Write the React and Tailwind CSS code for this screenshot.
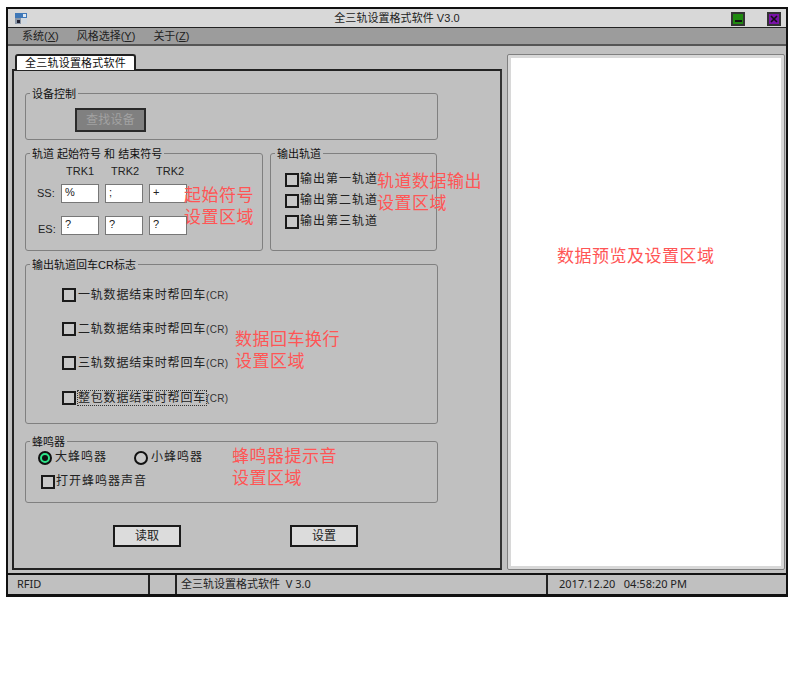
import React from "react";

const cjk = "font-['Liberation_Sans','Noto_Sans_CJK_SC',sans-serif]";

const GroupBox = ({ title, className, children }) => (
  <div className={`relative rounded-[3px] border border-[#808080] ${className}`}>
    <span className="absolute -top-[8px] left-[4px] bg-[#c0c0c0] px-[2px] text-[11px] leading-[16px] text-[#111] whitespace-nowrap">
      {title}
    </span>
    {children}
  </div>
);

const Check = ({ label }) => (
  <div className="flex items-center">
    <span className="w-[14px] h-[14px] shrink-0 border-2 border-[#1a1a1a] bg-[#c8c8c8]" />
    <span className="ml-[1px] text-[12px] leading-[15px] tracking-[1px] text-[#222] whitespace-nowrap">
      {label}
    </span>
  </div>
);

const CrCheck = ({ label, focused }) => (
  <div className="flex items-center h-[16px]">
    <span className="w-[14px] h-[14px] shrink-0 border-2 border-[#1a1a1a] bg-[#c8c8c8]" />
    <span
      className={`ml-[1px] text-[12px] leading-[14px] tracking-[0.8px] text-[#222] whitespace-nowrap ${focused ? "border border-dotted border-[#333]" : "border border-transparent"}`}
    >
      {label}
    </span>
    <span className="text-[10px] text-[#333] tracking-[0.3px] -ml-[1px]">(CR)</span>
  </div>
);

const Radio = ({ label, checked }) => (
  <div className="flex items-center">
    <span
      className={`flex items-center justify-center w-[14px] h-[14px] rounded-full border-2 border-[#111] ${checked ? "bg-[#2ee58a]" : "bg-[#c8c8c8]"}`}
    >
      {checked && <span className="w-[6px] h-[6px] rounded-full bg-[#111]" />}
    </span>
    <span className="ml-[3px] text-[12px] leading-[15px] tracking-[1px] text-[#222] whitespace-nowrap">
      {label}
    </span>
  </div>
);

const CharInput = ({ value }) => (
  <div className="w-[38px] h-[19px] bg-white border border-[#777] px-[3px] text-[11px] leading-[15px] text-[#222]">
    {value}
  </div>
);

const ActionButton = ({ children }) => (
  <button className="w-[68px] h-[22px] bg-[#dcdcdc] border-2 border-[#1a1a1a] text-[12px] leading-[16px] text-[#222]">
    {children}
  </button>
);

const Note = ({ className, children }) => (
  <div className={`absolute text-[17px] leading-[22px] tracking-[0.5px] text-[#ff5555] whitespace-nowrap ${className}`}>
    {children}
  </div>
);

const App = () => (
  <div className={`relative w-[790px] h-[682px] bg-white pt-[7px] pl-[6px] ${cjk}`}>
    <div className="w-[782px] h-[590px] border-2 border-b-[3px] border-[#111] bg-[#c0c0c0] flex flex-col">
      {/* title bar */}
      <div className="relative flex items-center h-[18px] bg-[#d8d8d8] shrink-0">
        <svg className="ml-[6px]" width="14" height="13" viewBox="0 0 14 13">
          <rect x="1" y="1" width="12" height="5" fill="#3f78b8" />
          <rect x="1" y="6" width="6" height="6" fill="#8a97a8" />
          <rect x="8" y="6" width="5" height="6" fill="#d0d8e0" />
          <rect x="3" y="8" width="3" height="3" fill="#223" />
          <rect x="9" y="2" width="3" height="3" fill="#dfe8f2" />
        </svg>
        <span className="absolute left-0 right-0 text-center text-[11px] leading-[16px] tracking-[0.05px] text-[#222]">
          全三轨设置格式软件 V3.0
        </span>
        <span className="absolute left-[723px] top-[3px] flex items-end justify-center w-[14px] h-[14px] bg-[#1f8a0f] border-2 border-[#333] pb-[2px]">
          <span className="w-[7px] h-[2px] bg-[#111]" />
        </span>
        <span className="absolute left-[759px] top-[3px] flex items-center justify-center w-[14px] h-[14px] bg-[#7a12a8] border-2 border-[#333]">
          <svg width="8" height="8" viewBox="0 0 8 8">
            <path d="M1 1 L7 7 M7 1 L1 7" stroke="#111" strokeWidth="1.6" />
          </svg>
        </span>
      </div>

      {/* menu */}
      <div className="flex items-center h-[19px] shrink-0 bg-[#9c9c9c] border-t border-b-2 border-t-[#222] border-b-[#555] pl-[14px] gap-[18px] text-[11px] text-[#222]">
        <span>系统(<u>X</u>)</span>
        <span>风格选择(<u>Y</u>)</span>
        <span>关于(<u>Z</u>)</span>
      </div>

      {/* body */}
      <div className="flex flex-1 min-h-0 pl-[4px] pr-[1px] pt-[8px] pb-[3px] gap-[5px]">
        <div className="w-[490px] flex flex-col">
          <div className="ml-[3px] w-[121px] h-[16px] bg-white border-2 border-b-0 border-[#222] rounded-t-[3px] text-center text-[11px] leading-[14px] tracking-[0.2px] text-[#111] -mb-[1px] z-10">
            全三轨设置格式软件
          </div>
          <div className="flex-1 border-2 border-[#222] border-r-[#333] bg-[#c0c0c0] pl-[11px] pr-[62px] pt-[22px]">
            <GroupBox title="设备控制" className="h-[47px] pl-[49px] pt-[14px]">
              <div className="flex items-center justify-center w-[71px] h-[24px] bg-[#808080] border-2 border-[#2a2a2a] text-[12px] tracking-[0.3px] text-[#a2a2a2]">
                查找设备
              </div>
            </GroupBox>

            <div className="flex gap-[7px] mt-[13px]">
              <GroupBox title="轨道 起始符号 和 结束符号" className="w-[238px] h-[98px] pt-[10px]">
                <div className="flex pl-[40px] gap-[19px] text-[11px] leading-[14px] text-[#222]">
                  <span className="w-[26px]">TRK1</span>
                  <span className="w-[26px]">TRK2</span>
                  <span className="w-[26px]">TRK2</span>
                </div>
                <div className="flex items-center mt-[6px] pl-[11px]">
                  <span className="w-[24px] text-[11px] text-[#222]">SS:</span>
                  <div className="flex gap-[6px]">
                    <CharInput value="%" />
                    <CharInput value=";" />
                    <CharInput value="+" />
                  </div>
                </div>
                <div className="flex items-center mt-[11px] pl-[12px]">
                  <span className="w-[23px] pt-[8px] text-[11px] leading-[14px] text-[#222]">ES:</span>
                  <div className="flex gap-[6px]">
                    <CharInput value="?" />
                    <CharInput value="?" />
                    <CharInput value="?" />
                  </div>
                </div>
              </GroupBox>
              <GroupBox title="输出轨道" className="w-[167px] h-[98px] pl-[14px] pt-[18px]">
                <div className="flex flex-col gap-[6px]">
                  <Check label="输出第一轨道" />
                  <Check label="输出第二轨道" />
                  <Check label="输出第三轨道" />
                </div>
              </GroupBox>
            </div>

            <GroupBox title="输出轨道回车CR标志" className="h-[160px] mt-[13px] pl-[36px] pt-[22px]">
              <div className="flex flex-col gap-[18px]">
                <CrCheck label="一轨数据结束时帮回车" />
                <CrCheck label="二轨数据结束时帮回车" />
                <CrCheck label="三轨数据结束时帮回车" />
                <div className="mt-[1px]">
                  <CrCheck label="整包数据结束时帮回车" focused />
                </div>
              </div>
            </GroupBox>

            <GroupBox title="蜂鸣器" className="h-[62px] mt-[17px] pl-[12px] pt-[8px]">
              <div className="flex gap-[27px]">
                <Radio label="大蜂鸣器" checked />
                <Radio label="小蜂鸣器" />
              </div>
              <div className="mt-[9px] ml-[3px]">
                <Check label="打开蜂鸣器声音" />
              </div>
            </GroupBox>

            <div className="flex pl-[88px] gap-[109px] mt-[22px]">
              <ActionButton>读取</ActionButton>
              <ActionButton>设置</ActionButton>
            </div>
          </div>
        </div>

        {/* preview */}
        <div className="flex-1 border border-[#808080] rounded-[2px] p-[3px] bg-[#d8d8d8]">
          <div className="h-full bg-white" />
        </div>
      </div>

      {/* status bar */}
      <div className="flex h-[21px] shrink-0 border-t-2 border-[#111] font-['Noto_Sans','Noto_Sans_CJK_SC',sans-serif] text-[11px] leading-[18px] text-[#222]">
        <div className="w-[142px] pl-[9px] border-r-2 border-[#222]">RFID</div>
        <div className="w-[27px] border-r-2 border-[#222]" />
        <div className="w-[369px] pl-[4px] whitespace-pre">全三轨设置格式软件  V 3.0</div>
        <div className="flex-1 pl-[11px] border-l-2 border-[#222] whitespace-pre">2017.12.20   04:58:20 PM</div>
      </div>
    </div>

    <Note className="left-[184px] top-[185px]">起始符号</Note>
    <Note className="left-[184px] top-[207px]">设置区域</Note>
    <Note className="left-[377px] top-[171px]">轨道数据输出</Note>
    <Note className="left-[377px] top-[193px]">设置区域</Note>
    <Note className="left-[557px] top-[246px]">数据预览及设置区域</Note>
    <Note className="left-[235px] top-[329px]">数据回车换行</Note>
    <Note className="left-[235px] top-[351px]">设置区域</Note>
    <Note className="left-[232px] top-[446px]">蜂鸣器提示音</Note>
    <Note className="left-[232px] top-[468px]">设置区域</Note>
  </div>
);

export default App;
